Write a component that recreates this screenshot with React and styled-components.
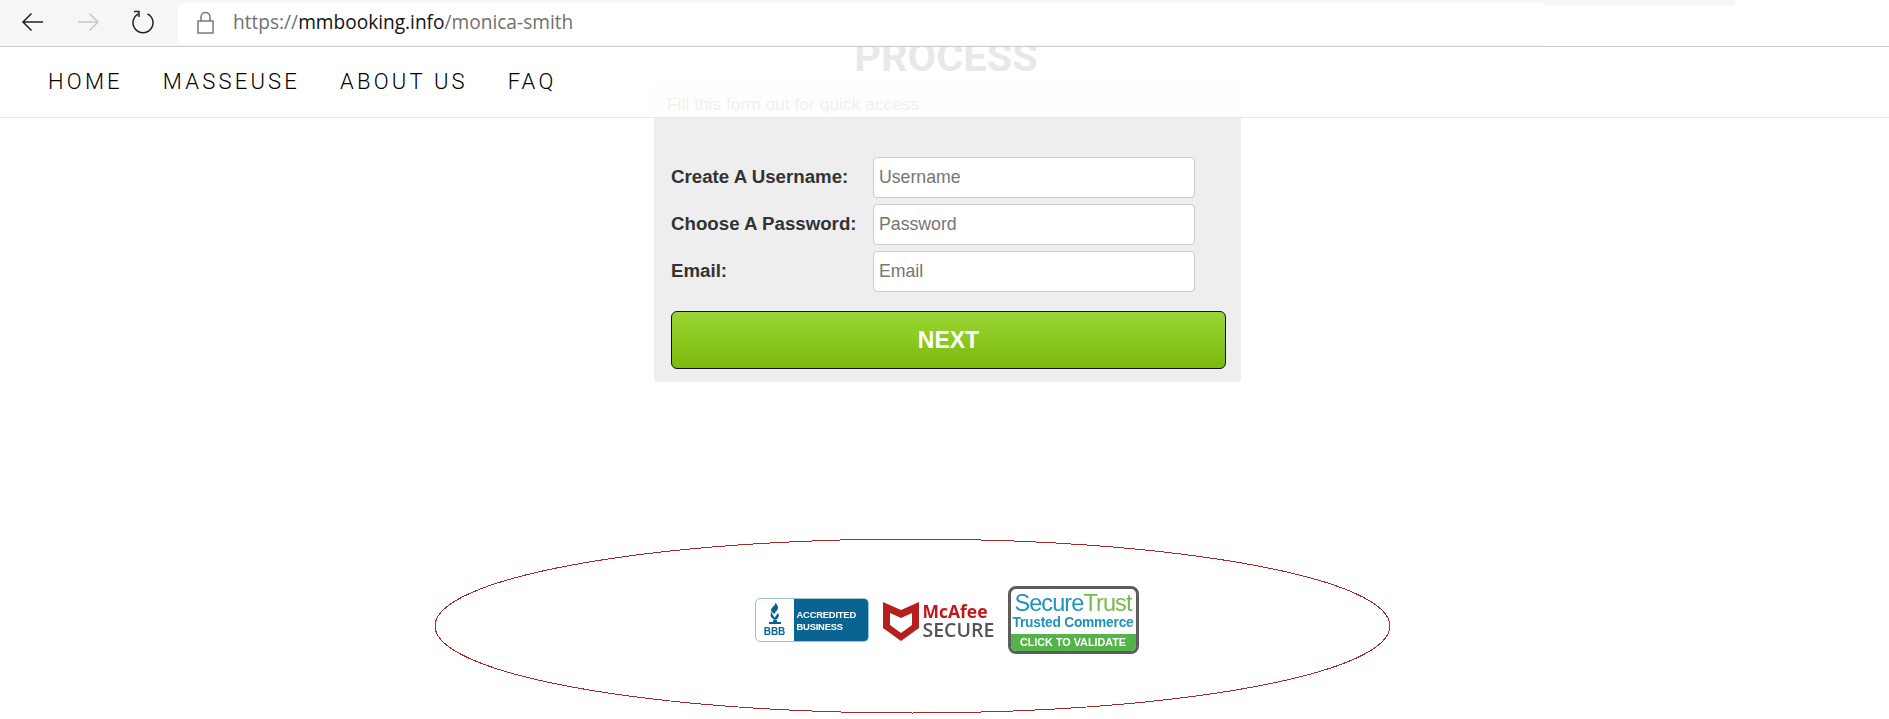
import React from "react";
import styled, { createGlobalStyle } from "styled-components";

const GlobalStyle = createGlobalStyle`
  html, body {
    margin: 0;
    padding: 0;
    height: 719px;
    overflow: hidden;
    background: #fff;
    font-family: "Liberation Sans", Arial, sans-serif;
  }
  * { box-sizing: border-box; }
`;

const BrowserBar = styled.header`
  position: relative;
  z-index: 3;
  height: 47px;
  display: flex;
  background: #f6f6f6;
  border-bottom: 1px solid #cdcdcd;
`;

const NavButtons = styled.div`
  width: 178px;
  display: flex;
  align-items: center;
  padding: 0 0 3px 16px;
  gap: 21px;
`;

const IconButton = styled.button`
  width: 34px;
  height: 34px;
  padding: 0;
  border: 0;
  background: none;
  display: flex;
  align-items: center;
  justify-content: center;
  color: ${(p) => (p.$disabled ? "#c8c8c8" : "#222")};
`;

const AddressArea = styled.div`
  flex: 1;
  display: flex;
  background: #fff;
`;

const AddressBox = styled.div`
  width: 1367px;
  height: 42px;
  margin-top: 3px;
  padding: 0 0 4px 19px;
  display: flex;
  align-items: center;
  gap: 19px;
  background: #fff;
  border-radius: 6px 0 0 6px;
`;

const TabStrip = styled.div`
  width: 190px;
  height: 6px;
  background: #f7f7f7;
`;

const Url = styled.span`
  font-family: "Open Sans", "Noto Sans", sans-serif;
  font-size: 19.1px;
  color: #707070;
  b {
    font-weight: 400;
    color: #111;
  }
`;

const Nav = styled.nav`
  position: absolute;
  z-index: 2;
  top: 47px;
  left: 0;
  right: 0;
  height: 71px;
  padding: 0 0 2px 48px;
  display: flex;
  align-items: center;
  gap: 40px;
  background: rgba(255, 255, 255, 0.885);
  border-bottom: 1px solid #e6e6e6;
`;

const NavLink = styled.a`
  font-family: Roboto, sans-serif;
  font-size: 22px;
  font-weight: 300;
  letter-spacing: 3.2px;
  color: #000;
`;

const Main = styled.main`
  padding-left: 6px;
`;

const Column = styled.div`
  width: 587px;
  margin: 0 auto;
`;

const Heading = styled.h1`
  margin: 0;
  height: 35px;
  padding-right: 3px;
  line-height: 20px;
  font-family: Roboto, sans-serif;
  font-size: 41.500px;
  font-weight: 700;
  text-align: center;
  color: #3a3a3a;
`;

const Panel = styled.section`
  padding: 13px 17px 13px 17px;
  background: #eee;
  border-radius: 4px;
`;

const Intro = styled.p`
  margin: -1px 0 43px -4px;
  font-size: 17.4px;
  line-height: 20px;
  color: #3c9a3c;
`;

const FormRow = styled.div`
  display: flex;
  align-items: center;
  height: 40px;
  margin-bottom: 7px;
`;

const Label = styled.label`
  width: 202px;
  font-size: 18.7px;
  font-weight: 700;
  color: #333;
`;

const Input = styled.input`
  width: 322px;
  height: 41px;
  padding: 0 5px;
  border: 1px solid #ccc;
  border-radius: 4px;
  background: #fff;
  font-family: "Liberation Sans", Arial, sans-serif;
  font-size: 17.7px;
  &::placeholder {
    color: #757575;
    opacity: 1;
  }
`;

const NextButton = styled.button`
  display: block;
  width: 555px;
  height: 58px;
  margin-top: 20px;
  border: 1px solid #111;
  border-radius: 6px;
  background: linear-gradient(#9ad634, #7cb90c);
  color: #fff;
  font-family: "Liberation Sans", Arial, sans-serif;
  font-size: 23px;
  font-weight: 700;
`;

const TrustSection = styled.div`
  position: relative;
  height: 337px;
  padding: 204px 3px 0 0;
  display: flex;
  justify-content: center;
  align-items: flex-start;
`;

const Annotation = styled.svg`
  position: absolute;
  left: 428px;
  top: 156px;
`;

const BadgeRow = styled.div`
  display: flex;
  align-items: center;
  gap: 12px;
  filter: blur(0.35px);
`;

const Bbb = styled.div`
  width: 114px;
  height: 44px;
  margin-left: 1px;
  display: flex;
  border: 1px solid #9cc4d4;
  border-radius: 5px;
  overflow: hidden;
  background: #fff;
`;

const BbbMark = styled.div`
  width: 38px;
  display: flex;
  flex-direction: column;
  align-items: center;
  padding-top: 3px;
  color: #0a6491;
  font-size: 10px;
  font-weight: 700;
  line-height: 10px;
`;

const BbbText = styled.div`
  flex: 1;
  background: #0a6491;
  color: #fff;
  padding: 10px 0 0 3px;
  font-size: 9.400px;
  font-weight: 700;
  letter-spacing: -0.2px;
  line-height: 12px;
`;

const McAfee = styled.div`
  width: 116px;
  margin-left: 2px;
  display: flex;
  align-items: center;
  gap: 4px;
`;

const McAfeeName = styled.div`
  font-family: "Open Sans", sans-serif;
  font-size: 17.5px;
  font-weight: 700;
  line-height: 18px;
  color: #c01818;
`;

const McAfeeSecure = styled.div`
  font-family: "Open Sans", sans-serif;
  font-size: 19.5px;
  font-weight: 600;
  line-height: 19px;
  color: #555;
`;

const SecureTrust = styled.div`
  width: 131px;
  height: 68px;
  margin-left: -3px;
  display: flex;
  flex-direction: column;
  align-items: center;
  border: 3px solid #5d5d5d;
  border-radius: 8px;
  overflow: hidden;
  background: #fff;
`;

const StName = styled.div`
  margin-top: 2px;
  font-size: 23.5px;
  line-height: 24px;
  letter-spacing: -0.9px;
  color: #1f93bd;
  span {
    color: #74bb4c;
  }
`;

const StSub = styled.div`
  font-size: 13.8px;
  font-weight: 700;
  line-height: 15px;
  letter-spacing: -0.25px;
  white-space: nowrap;
  color: #1f93bd;
`;

const StFoot = styled.div`
  margin-top: auto;
  width: 100%;
  height: 17px;
  background: #54b44a;
  color: #fff;
  text-align: center;
  font-size: 10.8px;
  font-weight: 700;
  line-height: 17px;
`;

const Back = () => (
  <svg width="24" height="20" viewBox="0 0 24 20" fill="none" stroke="currentColor" strokeWidth="1.5">
    <path d="M22 10H2M10.500 1.500 2 10l8.500 8.500" />
  </svg>
);

const Forward = () => (
  <svg width="24" height="20" viewBox="0 0 24 20" fill="none" stroke="currentColor" strokeWidth="1.5">
    <path d="M2 10h20M13.500 1.500 22 10l-8.500 8.500" />
  </svg>
);

const Reload = () => (
  <svg width="24" height="24" viewBox="0 0 24 24" fill="none" stroke="currentColor" strokeWidth="1.5">
    <path d="M7.500 3.800a10 10 0 1 0 9 0" />
    <path d="M3 1.500h5v5.500" />
  </svg>
);

const Lock = () => (
  <svg width="17" height="23" viewBox="0 0 17 23" fill="none" stroke="#707070" strokeWidth="1.4">
    <rect x="1" y="10" width="15" height="12" />
    <path d="M4 10V6a4.500 4.500 0 0 1 9 0v4" />
  </svg>
);

const BbbTorch = () => (
  <svg width="18" height="25" viewBox="0 0 18 25" fill="#0a6491">
    <path d="M9 0c2 3-4 5-4 8 0 2 2 3 4 4-1-2 4-4 3-7C11.500 3 10 1 9 0Z" />
    <path d="M6 10c-3 3-1 6 3 8 3-1 5-4 3-7-1 2-3 3-3 5-1-2-3-3-3-6Z" />
    <rect x="3" y="20" width="12" height="2" />
    <rect x="7" y="18" width="4" height="3" />
  </svg>
);

const McAfeeShield = () => (
  <svg width="36" height="42" viewBox="0 0 36 42">
    <path
      fill="#b5201e"
      d="M0 3 18 11 36 3v26L18 42 0 29Z M7 14v12l11 8 11-8V14l-11 5Z"
      fillRule="evenodd"
    />
  </svg>
);

const App = () => {
  return (
    <>
      <GlobalStyle />
      <BrowserBar>
        <NavButtons>
          <IconButton aria-label="Back">
            <Back />
          </IconButton>
          <IconButton aria-label="Forward" $disabled>
            <Forward />
          </IconButton>
          <IconButton aria-label="Reload">
            <Reload />
          </IconButton>
        </NavButtons>
        <AddressBox>
          <Lock />
          <Url>
            https://<b>mmbooking.info</b>/monica-smith
          </Url>
        </AddressBox>
        <AddressArea>
          <TabStrip />
        </AddressArea>
      </BrowserBar>

      <Nav>
        <NavLink>HOME</NavLink>
        <NavLink>MASSEUSE</NavLink>
        <NavLink>ABOUT US</NavLink>
        <NavLink>FAQ</NavLink>
      </Nav>

      <Main>
        <Column>
          <Heading>PROCESS</Heading>
          <Panel>
            <Intro>Fill this form out for quick access:</Intro>
            <FormRow>
              <Label htmlFor="username">Create A Username:</Label>
              <Input id="username" placeholder="Username" />
            </FormRow>
            <FormRow>
              <Label htmlFor="password">Choose A Password:</Label>
              <Input id="password" placeholder="Password" />
            </FormRow>
            <FormRow>
              <Label htmlFor="email">Email:</Label>
              <Input id="email" placeholder="Email" />
            </FormRow>
            <NextButton>NEXT</NextButton>
          </Panel>
        </Column>
        <TrustSection>
          <Annotation width="958" height="176" viewBox="0 0 958 176">
            <ellipse
              cx="478.500"
              cy="88"
              rx="477.500"
              ry="87"
              fill="none"
              stroke="#a32a2a"
              strokeWidth="1"
              shapeRendering="crispEdges"
            />
          </Annotation>
          <BadgeRow>
            <Bbb>
              <BbbMark>
                <BbbTorch />
                BBB
              </BbbMark>
              <BbbText>
                ACCREDITED
                <br />
                BUSINESS
              </BbbText>
            </Bbb>
            <McAfee>
              <McAfeeShield />
              <div>
                <McAfeeName>McAfee</McAfeeName>
                <McAfeeSecure>SECURE</McAfeeSecure>
              </div>
            </McAfee>
            <SecureTrust>
              <StName>
                Secure<span>Trust</span>
              </StName>
              <StSub>Trusted Commerce</StSub>
              <StFoot>CLICK TO VALIDATE</StFoot>
            </SecureTrust>
          </BadgeRow>
        </TrustSection>
      </Main>
    </>
  );
};

export default App;
